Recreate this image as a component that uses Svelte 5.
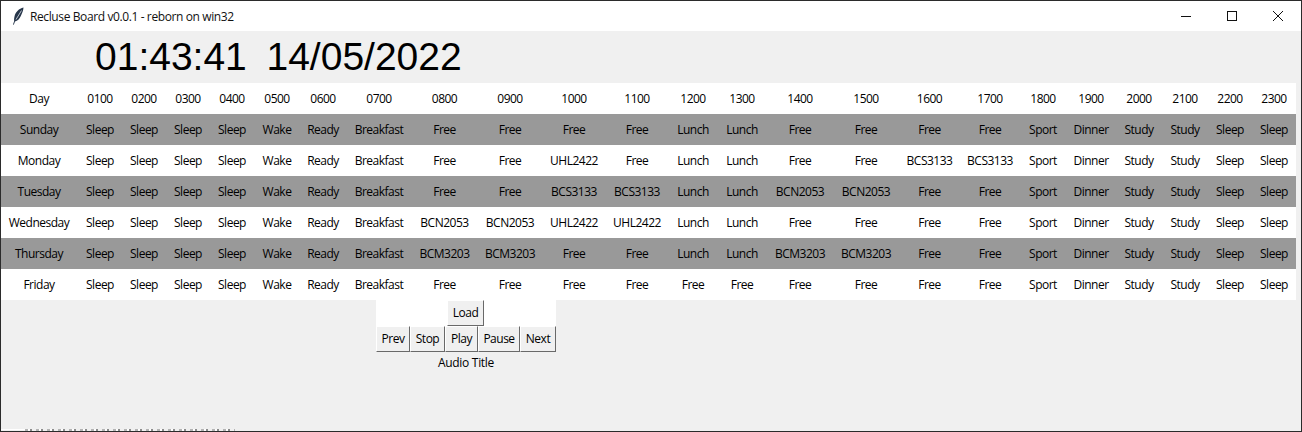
<script lang="ts">
  const hours = ['0100','0200','0300','0400','0500','0600','0700','0800','0900','1000','1100','1200','1300','1400','1500','1600','1700','1800','1900','2000','2100','2200','2300'];

  const head = ['Sleep','Sleep','Sleep','Sleep','Wake','Ready','Breakfast'];
  const tail = ['Sport','Dinner','Study','Study','Sleep','Sleep'];

  // slots 0800 to 1700 for each day
  const days = [
    { name: 'Sunday', slots: ['Free','Free','Free','Free','Lunch','Lunch','Free','Free','Free','Free'] },
    { name: 'Monday', slots: ['Free','Free','UHL2422','Free','Lunch','Lunch','Free','Free','BCS3133','BCS3133'] },
    { name: 'Tuesday', slots: ['Free','Free','BCS3133','BCS3133','Lunch','Lunch','BCN2053','BCN2053','Free','Free'] },
    { name: 'Wednesday', slots: ['BCN2053','BCN2053','UHL2422','UHL2422','Lunch','Lunch','Free','Free','Free','Free'] },
    { name: 'Thursday', slots: ['BCM3203','BCM3203','Free','Free','Lunch','Lunch','BCM3203','BCM3203','Free','Free'] },
    { name: 'Friday', slots: ['Free','Free','Free','Free','Free','Free','Free','Free','Free','Free'] }
  ];

  const controls = ['Prev','Stop','Play','Pause','Next'];
</script>

<div class="window">
  <div class="titlebar">
    <svg class="feather" width="14" height="18" viewBox="0 0 14 18">
      <path d="M12.500 .5C8 1.500 4.500 5 3.500 9.500 3 11.500 3 13 3.200 14L2 17.500l.8.3L4 14.500c2.500-.5 4.500-2.500 5.800-5.500C11.200 6 12.300 3.500 12.500 .5z" fill="#27364a"/>
      <path d="M10.500 3.500 5 12.500" stroke="#dfe6ee" stroke-width="0.8" fill="none"/>
    </svg>
    <span class="title">Recluse Board v0.0.1 - reborn on win32</span>
    <div class="winbtns">
      <svg width="46" height="30" viewBox="0 0 46 30"><path d="M18 15.500h10" stroke="#111" stroke-width="1"/></svg>
      <svg width="46" height="30" viewBox="0 0 46 30"><rect x="18.500" y="10.500" width="9" height="9" fill="none" stroke="#111"/></svg>
      <svg width="46" height="30" viewBox="0 0 46 30"><path d="M18 10l10 10M28 10L18 20" stroke="#111" stroke-width="1"/></svg>
    </div>
  </div>

  <div class="content">
    <div class="clock">01:43:41&nbsp;&nbsp;14/05/2022</div>

    <div class="board">
      <div class="row">
        <div class="day">Day</div>
        {#each hours as h}<div>{h}</div>{/each}
      </div>
      {#each days as day, i}
        <div class="row" class:dark={i % 2 === 0}>
          <div class="day">{day.name}</div>
          {#each [...head, ...day.slots, ...tail] as slot}<div>{slot}</div>{/each}
        </div>
      {/each}
    </div>

    <div class="player">
      <div class="load-row"><button type="button">Load</button></div>
      <div class="controls">
        {#each controls as c}<button type="button">{c}</button>{/each}
      </div>
      <div class="audio-title">Audio Title</div>
    </div>
  </div>

  <!-- what shows through at the bottom edge of the captured window -->
  <div class="edge-line"></div>
  <div class="edge-speckle"></div>
</div>

<style>
  :global(body) {
    margin: 0;
    background: #f0f0f0;
  }
  .window {
    position: relative;
    width: 1302px;
    height: 432px;
    box-sizing: border-box;
    border: 1px solid #2b2b2b;
    display: flex;
    flex-direction: column;
    font-family: "Open Sans", sans-serif;
    font-size: 12px;
    letter-spacing: -0.5px;
    color: #000;
    overflow: hidden;
  }
  .titlebar {
    height: 30px;
    flex-shrink: 0;
    background: #fff;
    display: flex;
    align-items: center;
    padding-left: 10px;
  }
  .feather { margin-right: 5px; }
  .title { color: #111; font-size: 12px; letter-spacing: -0.39px; }
  .winbtns {
    margin-left: auto;
    display: flex;
  }
  .content {
    flex: 1;
    background: #f0f0f0;
  }
  .clock {
    height: 52px;
    box-sizing: border-box;
    padding-left: 94px;
    font-family: "Liberation Sans", Arial, sans-serif;
    font-size: 39px;
    letter-spacing: 0;
    line-height: 52px;
    word-spacing: -1px;
    color: #000;
  }
  .board { width: 1295px; }
  .row {
    display: grid;
    grid-template-columns: 77px 44px 44px 44px 44px 46px 46px 66px 65px 66px 62px 64px 48px 50px 66px 66px 61px 60px 46px 50px 46px 46px 44px 44px;
    height: 31px;
    box-sizing: border-box;
    padding-bottom: 1px;
    background: #fff;
    align-items: center;
    text-align: center;
  }
  .row.dark { background: #999; }
  .day { padding-right: 1px; }
  .player {
    width: 180px;
    margin-left: 375px;
    display: flex;
    flex-direction: column;
    align-items: center;
  }
  .load-row {
    align-self: stretch;
    background: #fff;
    display: flex;
    justify-content: center;
    padding-right: 1px;
    box-sizing: border-box;
  }
  .load-row button { width: 37px; }
  .controls {
    align-self: stretch;
    display: grid;
    grid-template-columns: 34px 35px 33px 42px 36px;
  }
  button {
    font: inherit;
    letter-spacing: inherit;
    color: #000;
    background: #f0f0f0;
    height: 26px;
    padding: 0 0 2px;
    margin: 0;
    border: 1px solid;
    border-color: #fff #696969 #696969 #fff;
    border-radius: 0;
  }
  .audio-title {
    margin-top: 2px;
    line-height: 18px;
    letter-spacing: -0.3px;
  }
  .edge-line {
    position: absolute;
    left: 0;
    bottom: 1px;
    width: 24px;
    height: 1px;
    background: #fff;
  }
  .edge-speckle {
    position: absolute;
    left: 24px;
    bottom: 0;
    width: 210px;
    height: 2px;
    background: repeating-linear-gradient(90deg, #b4b4b4 0 3px, #fff 3px 5px, #8c8c8c 5px 7px, #f0f0f0 7px 11px);
  }
</style>
